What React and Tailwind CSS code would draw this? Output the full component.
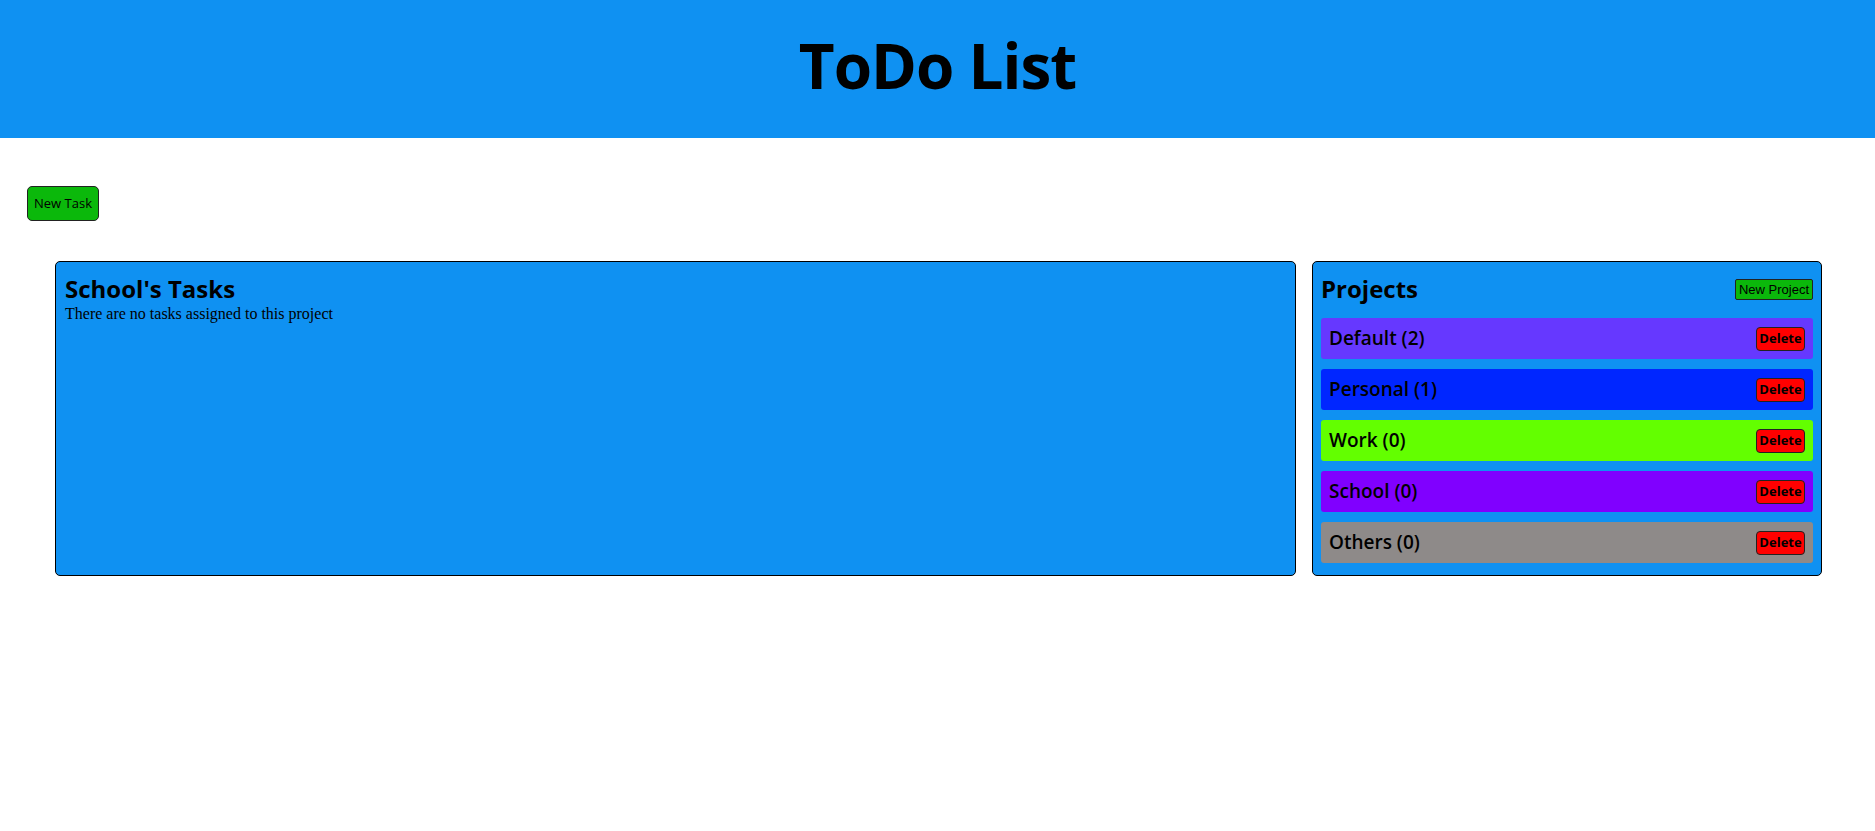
import React from "react";

const projects = [
  { name: "Default", count: 2, color: "bg-[#6638ff]" },
  { name: "Personal", count: 1, color: "bg-[#0026ff]" },
  { name: "Work", count: 0, color: "bg-[#63ff00]" },
  { name: "School", count: 0, color: "bg-[#8000ff]" },
  { name: "Others", count: 0, color: "bg-[#8e8a89]" },
];

function ProjectItem({ project }) {
  return (
    <div
      className={`${project.color} h-[41px] rounded-[3px] pl-[8px] pr-[8px] flex items-center justify-between`}
    >
      <span className="text-[19px] font-semibold text-black">
        {project.name} ({project.count})
      </span>
      <button className="w-[49px] h-[24px] bg-[#ff0000] border border-[#222] rounded-[4px] text-[13px] font-bold text-black leading-none">
        Delete
      </button>
    </div>
  );
}

function App() {
  return (
    <div className="min-h-screen bg-white text-black font-['Open_Sans',sans-serif]">
      <header className="h-[138px] bg-[#0f91f2] flex items-center justify-center pb-[8px]">
        <h1 className="text-[62px] font-bold tracking-[-1px] leading-none">ToDo List</h1>
      </header>

      <div className="pt-[48px] pl-[27px]">
        <button className="w-[72px] h-[35px] bg-[#0bb80b] border border-[#222] rounded-[5px] text-[13px]">
          New Task
        </button>
      </div>

      <div className="mt-[40px] pl-[55px] pr-[53px] flex gap-[16px]">
        {/* Tasks panel */}
        <div className="flex-1 bg-[#0f91f2] border border-black rounded-[5px] px-[9px] pt-[11px]">
          <h2 className="text-[24px] font-bold leading-[32px]">School's Tasks</h2>
          <p className="font-['Liberation_Serif',serif] text-[16px] leading-[18px]">
            There are no tasks assigned to this project
          </p>
        </div>

        {/* Projects panel */}
        <div className="w-[510px] bg-[#0f91f2] border border-black rounded-[5px] px-[8px] pt-[11px] pb-[12px]">
          <div className="flex items-center justify-between mb-[13px]">
            <h2 className="text-[24px] font-bold leading-[32px]">Projects</h2>
            <button className="w-[78px] h-[21px] whitespace-nowrap bg-[#0bb80b] border border-[#222] rounded-[2px] text-[13px] leading-none font-['Liberation_Sans',sans-serif]">
              New Project
            </button>
          </div>
          <div className="flex flex-col gap-[10px]">
            {projects.map((p) => (
              <ProjectItem key={p.name} project={p} />
            ))}
          </div>
        </div>
      </div>
    </div>
  );
}

export default App;
